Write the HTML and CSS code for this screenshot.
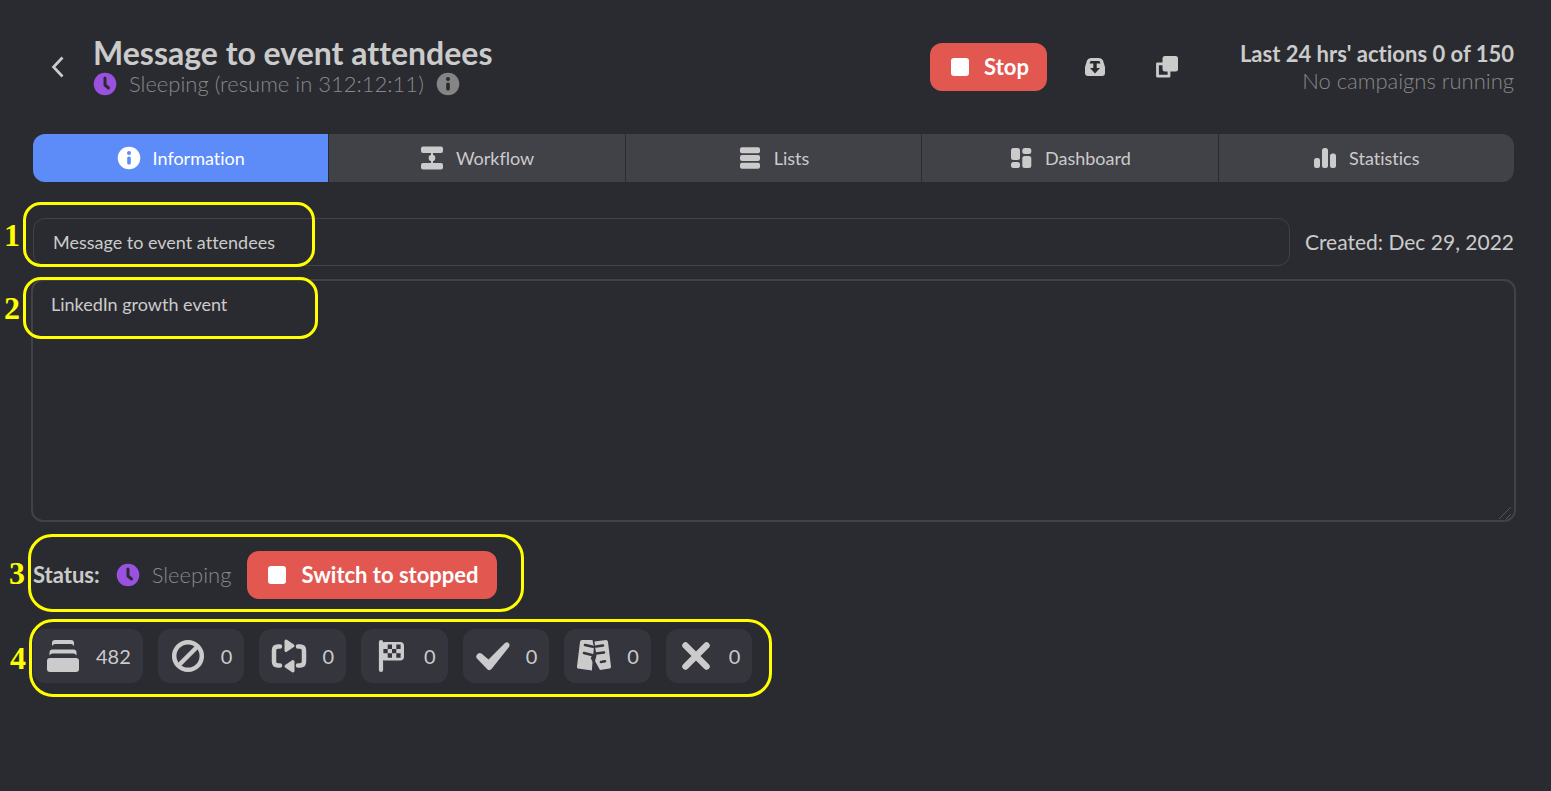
FILE: index.html
```html
<!DOCTYPE html>
<html lang="en">
<head>
<meta charset="utf-8">
<title>Message to event attendees</title>
<link rel="stylesheet" href="styles.css">
</head>
<body>
<div class="page">
  <header class="header">
    <button class="back" type="button" aria-label="Back"><svg width="24" height="24" viewBox="0 0 24 24"><path d="M17.500 2.500 8.500 12 17.500 21.500" fill="none" stroke="currentColor" stroke-width="2.700"/></svg></button>
    <div class="heading">
      <h1 class="title">Message to event attendees</h1>
      <div class="state">
        <svg class="clock" width="24" height="24" viewBox="0 0 24 24"><circle cx="12" cy="12" r="11.300" fill="currentColor"/><path d="M12 6v7l3.500 3" fill="none" stroke="#2a2b30" stroke-width="3" stroke-linecap="round" stroke-linejoin="round"/></svg>
        <span>Sleeping (resume in 312:12:11)</span>
        <svg class="hint" width="24" height="24" viewBox="0 0 24 24"><circle cx="12" cy="12" r="11.300" fill="currentColor"/><circle cx="12" cy="7" r="2" fill="#2a2b30"/><rect x="10.200" y="10.500" width="3.600" height="8" rx="1.500" fill="#2a2b30"/></svg>
      </div>
    </div>
    <div class="actions">
      <button class="stop" type="button"><span class="square"></span>Stop</button>
      <button class="tool" type="button" aria-label="Archive"><svg width="24" height="24" viewBox="0 0 24 24"><path d="M8 3h8q3 0 4 2.500l2 6.500v6q0 3-3 3H5q-3 0-3-3v-6l2-6.500Q5 3 8 3z" fill="currentColor"/><path d="M7.500 6h9l1 2.500h-3.800V13h3.300L12 18.500 7 13h3.300V8.500H6.500z" fill="#2a2b30"/></svg></button>
      <button class="tool" type="button" aria-label="Duplicate"><svg width="24" height="24" viewBox="0 0 24 24"><path d="M8 8.800H2.500v12.400h11.500V16" fill="none" stroke="currentColor" stroke-width="2.800" stroke-linejoin="round"/><rect x="7.500" y="1" width="15.500" height="15.500" rx="2.500" fill="currentColor"/></svg></button>
    </div>
    <div class="quota"><strong>Last 24 hrs' actions 0 of 150</strong><span>No campaigns running</span></div>
  </header>

  <nav class="tabs">
    <button class="tab active" type="button"><svg width="24" height="24" viewBox="0 0 24 24"><circle cx="12" cy="12" r="11.300" fill="currentColor"/><circle cx="12" cy="7" r="2" fill="#5d8bf7"/><rect x="10.200" y="10.500" width="3.600" height="8" rx="1.500" fill="#5d8bf7"/></svg>Information</button>
    <button class="tab" type="button"><svg width="24" height="24" viewBox="0 0 24 24" fill="currentColor"><rect x="1" y="0.500" width="22" height="6.500" rx="2"/><rect x="1" y="17" width="22" height="6.500" rx="2"/><path d="M11 6h2v12h-2z"/><circle cx="12" cy="12" r="3.300"/></svg>Workflow</button>
    <button class="tab" type="button"><svg width="24" height="24" viewBox="0 0 24 24" fill="currentColor"><rect x="2" y="1.300" width="20" height="6" rx="2"/><rect x="2" y="9" width="20" height="6" rx="2"/><rect x="2" y="16.700" width="20" height="6" rx="2"/></svg>Lists</button>
    <button class="tab" type="button"><svg width="24" height="24" viewBox="0 0 24 24" fill="currentColor"><rect x="2" y="2" width="9" height="12" rx="2.500"/><rect x="2" y="16" width="9" height="6" rx="2.500"/><rect x="13.300" y="2" width="9" height="6" rx="2.500"/><rect x="13.300" y="10" width="9" height="12" rx="2.500"/></svg>Dashboard</button>
    <button class="tab" type="button"><svg width="24" height="24" viewBox="0 0 24 24" fill="currentColor"><rect x="1" y="12" width="6" height="10" rx="2.500"/><rect x="9" y="2" width="6" height="20" rx="2.500"/><rect x="17" y="7.500" width="6" height="14.500" rx="2.500"/></svg>Statistics</button>
  </nav>

  <main class="content">
    <div class="name-row marked">
      <input class="field" type="text" aria-label="Campaign name" value="Message to event attendees">
      <span class="created">Created: Dec 29, 2022</span>
      <div class="mark mark-name"><b>1</b></div>
    </div>
    <div class="marked">
      <textarea class="field notes" aria-label="Description">LinkedIn growth event</textarea>
      <svg class="grip" width="14" height="14" viewBox="0 0 14 14"><path d="M1 13 13 1M8 13l5-5" stroke="#55565b" fill="none"/></svg>
      <div class="mark mark-notes"><b>2</b></div>
    </div>
    <div class="status-row marked">
      <strong>Status:</strong>
      <svg class="clock" width="24" height="24" viewBox="0 0 24 24"><circle cx="12" cy="12" r="11.300" fill="currentColor"/><path d="M12 6v7l3.500 3" fill="none" stroke="#2a2b30" stroke-width="3" stroke-linecap="round" stroke-linejoin="round"/></svg>
      <span class="muted">Sleeping</span>
      <button class="stop" type="button"><span class="square"></span>Switch to stopped</button>
      <div class="mark mark-status"><b>3</b></div>
    </div>
    <div class="counters marked">
      <button class="counter" type="button" aria-label="Queued"><svg width="36" height="36" viewBox="0 0 36 36" fill="currentColor"><path d="M7 8V5q0-3 3-3h16q3 0 3 3v3q-1.500-2-3-2H10q-1.500 0-3 2zM4.500 17.500v-3q0-3 3-3h21q3 0 3 3v3q-1.500-2-3-2h-21q-1.500 0-3 2z"/><rect x="2" y="20" width="32" height="14" rx="3"/></svg>482</button>
      <button class="counter" type="button" aria-label="Blocked"><svg width="36" height="36" viewBox="0 0 36 36" fill="none" stroke="currentColor" stroke-width="4.500"><circle cx="18" cy="18" r="13.800"/><path d="M8.500 27.500l19-19"/></svg>0</button>
      <button class="counter" type="button" aria-label="Processing"><svg width="36" height="36" viewBox="0 0 36 36"><path d="M9 8.500H7q-4 0-4 4v11q0 4 4 4h2M27 8.500h2q4 0 4 4v11q0 4-4 4h-2" fill="none" stroke="currentColor" stroke-width="4.500" stroke-linecap="round"/><path d="M15 3v9.500l7-4.700zM22 33v-9.500l-7 4.700z" fill="currentColor" stroke="currentColor" stroke-width="3" stroke-linejoin="round"/></svg>0</button>
      <button class="counter" type="button" aria-label="Finished"><svg width="36" height="36" viewBox="0 0 36 36"><path d="M8 4v28" stroke="currentColor" stroke-width="4.200" stroke-linecap="round"/><rect x="8" y="4" width="23" height="18.500" rx="4" fill="currentColor"/><path d="M14.700 6.500h4.300v4.400h-4.300zM23.300 6.500h4.300v4.400h-4.300zM10.400 10.900h4.300v4.400h-4.300zM19 10.900h4.300v4.400H19zM14.700 15.300h4.300v4.400h-4.300zM23.300 15.300h4.300v4.400h-4.300z" fill="#35353d"/></svg>0</button>
      <button class="counter" type="button" aria-label="Successful"><svg width="36" height="36" viewBox="0 0 36 36"><path d="M2 16.500q2-2.500 4.500-1l7 6L30 5q2.500-1.500 4 .5 1 1.500 0 3.500L16.500 31q-2 2-4 .5L1.500 20q-1-2 .5-3.500z" fill="currentColor"/></svg>0</button>
      <button class="counter" type="button" aria-label="Excluded"><svg width="36" height="36" viewBox="0 0 36 36"><path d="M6 2h10.500l.7 4 .8 2-.7 8-2.600 4 1.800 4-.6 8.600L2 30.500q-1.300-.2-1-2L4 4q.3-2 2-2zM18.500 3.500l11.500-1.500q1.800 0 2 2l3 24.500q.2 1.800-1.500 2.100l-9.500 1.400-5-9 1.500-5.500-1-6z" fill="currentColor"/><path d="M9 7l8 1.800M8 15l8 2M20 8.500l7-1M20 15.500l8-1M25 24l4-.7" stroke="#35353d" stroke-width="2.600" stroke-linecap="round"/></svg>0</button>
      <button class="counter" type="button" aria-label="Failed"><svg width="36" height="36" viewBox="0 0 36 36"><path d="M7.500 7.500l21 21M28.500 7.500l-21 21" stroke="currentColor" stroke-width="6.500" stroke-linecap="round"/></svg>0</button>
      <div class="mark mark-counters"><b>4</b></div>
    </div>
  </main>
</div>
</body>
</html>
```
FILE: styles.css
```css
* { box-sizing: border-box; }
body { margin: 0; background: #2a2b30; color: #cbcbcb; font: 400 20px/28px Lato, sans-serif; font-variant-ligatures: none; }
button, input, textarea { font: inherit; color: inherit; font-variant-ligatures: none; }
button { border: 0; padding: 0; background: none; display: flex; align-items: center; justify-content: center; }
svg { flex: none; display: block; }
.page { min-height: 100vh; padding: 35px 37px 40px 33px; }
.header { display: flex; height: 63px; align-items: center; }
.back { width: 48px; height: 48px; }
.heading { margin-left: 12px; }
.title { margin: 0; font-size: 32px; line-height: 34px; font-weight: 700; }
.state { display: flex; align-items: center; gap: 12px; color: #88888a; font-weight: 300; font-size: 22px; }
.hint { color: #858585; }
.clock { color: #9b51e0; }
.actions { display: flex; margin-left: auto; gap: 24px; }
.stop { height: 48px; padding: 0 18px 0 21px; gap: 15px; border-radius: 12px; background: #e2574f; color: #fff; font-weight: 700; font-size: 22px; }
.square { width: 18px; height: 18px; border-radius: 3px; background: #fff; }
.tool { width: 48px; height: 48px; }
.quota { display: flex; flex-direction: column; margin-left: 49px; text-align: right; font-size: 22px; line-height: 27px; }
.quota span { color: #88888a; font-weight: 300; }
.tabs { display: grid; grid-template-columns: repeat(5, 1fr); gap: 1px; margin-top: 36px; border-radius: 12px; overflow: hidden; }
.tab { height: 48px; gap: 12px; background: #414148; font-size: 18px; }
.tab.active { background: #5d8bf7; color: #fff; }
.content { margin-top: 36px; }
.marked { position: relative; }
.name-row { display: flex; align-items: center; gap: 15px; font-size: 21px; }
.field { flex: 1; min-width: 0; height: 48px; padding: 0 19px; border: 1px solid #414146; border-radius: 12px; background: transparent; font-size: 18px; outline: 0; }
.notes { display: block; width: calc(100% + 4px); height: 243px; margin: 13px -2px 0; padding: 9px 18px; border-width: 2px; resize: none; }
.grip { position: absolute; right: 2px; bottom: 2px; }
.status-row { display: flex; align-items: center; gap: 16px; margin-top: 29px; font-size: 22px; }
.status-row .clock { margin-right: -4px; }
.muted { color: #88888a; font-weight: 300; }
.counters { display: flex; gap: 15px; margin-top: 30px; font-size: 20px; }
.counter { height: 54px; padding: 0 12px; gap: 15px; border-radius: 12px; background: #35353d; }
.mark { position: absolute; border: 3px solid #ff0; border-radius: 18px; pointer-events: none; }
.mark b { position: absolute; right: 100%; top: 50%; margin-right: 6px; color: #ff0; font: 700 32px/32px "Liberation Serif", serif; transform: translateY(-50%); }
.mark-name { left: -10px; top: -16px; width: 292px; height: 65px; }
.mark-notes { left: -10px; top: -2px; width: 295px; height: 62px; }
.mark-status { left: -5px; top: -17px; width: 496px; height: 78px; border-radius: 24px; }
.mark-counters { left: -4px; top: -10px; width: 743px; height: 78px; border-radius: 24px; }
```
